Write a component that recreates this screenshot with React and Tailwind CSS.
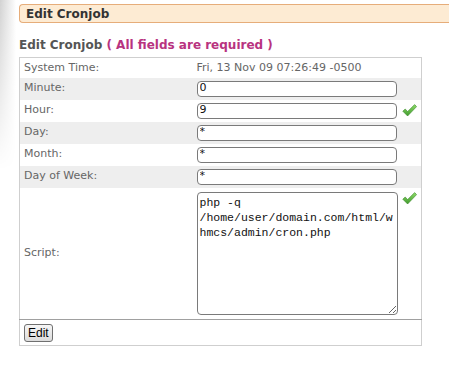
import React from "react";

const font = { fontFamily: '"DejaVu Sans", Verdana, sans-serif' };

const Check = () => (
  <svg width="15" height="13" viewBox="0 0 15 13" className="shrink-0">
    <defs>
      <linearGradient id="chk" x1="0" y1="0" x2="0" y2="1">
        <stop offset="0" stopColor="#8fdc6a" />
        <stop offset="1" stopColor="#3f9a2c" />
      </linearGradient>
    </defs>
    <path d="M0.8 7.2 L3.2 5 L5.6 7.6 L12.6 0.6 L14.6 2.6 L5.6 12 Z" fill="url(#chk)" stroke="#3a8a2a" strokeWidth="0.6" strokeLinejoin="round" />
  </svg>
);

const rows = [
  { label: "Minute:", value: "0", alt: true },
  { label: "Hour:", value: "9", ok: true },
  { label: "Day:", value: "*", alt: true },
  { label: "Month:", value: "*" },
  { label: "Day of Week:", value: "*", alt: true },
];

export default function App() {
  return (
    <div className="flex min-h-[366px] w-[449px] overflow-hidden bg-white" style={font}>
      <div className="h-[170px] w-[19px] shrink-0 bg-[linear-gradient(to_right,#d2d2d2,#ffffff_85%)] [mask-image:linear-gradient(to_bottom,black,transparent)]" />
      <div className="flex-1 pt-[4px]">
        <div className="flex h-[19px] items-center rounded-l-[4px] border border-r-0 border-[#e6ad7a] bg-[#fdebd3] pl-[6px] text-[12px] font-bold text-[#333]">
          Edit Cronjob
        </div>
        <div className="mt-[15px] text-[12px] font-bold leading-[15px] text-[#555]">
          Edit Cronjob <span className="text-[#b83380]">( All fields are required )</span>
        </div>
        <table className="mt-[4px] w-[403px] border-collapse border border-[#cfcfcf] text-[11px] text-[#666]">
          <tbody>
            <tr className="h-[20px]">
              <td className="w-[173px] pl-[4px] align-middle">System Time:</td>
              <td className="pl-[4px] align-middle">Fri, 13 Nov 09 07:26:49 -0500</td>
            </tr>
            {rows.map((r) => (
              <tr key={r.label} className={`h-[22px] ${r.alt ? "bg-[#eeeeee]" : ""}`}>
                <td className="pl-[4px] align-middle">{r.label}</td>
                <td className="pl-[4px] align-middle">
                  <div className="flex items-center gap-[5px]">
                    <input
                      readOnly
                      value={r.value}
                      className="h-[16px] w-[200px] rounded-[4px] border border-[#7a7a7a] bg-white px-[2px] text-[11px] text-[#111] outline-none"
                      style={font}
                    />
                    {r.ok && <Check />}
                  </div>
                </td>
              </tr>
            ))}
            <tr className="h-[132px]">
              <td className="pl-[4px] align-middle">Script:</td>
              <td className="pl-[4px] align-top pt-[4px]">
                <div className="flex items-start gap-[4px]">
                  <textarea
                    readOnly
                    value="php -q /home/user/domain.com/html/whmcs/admin/cron.php"
                    className="h-[123px] w-[201px] rounded-[4px] border border-[#7a7a7a] bg-white px-[2px] py-[2px] text-[11.5px] leading-[15px] text-[#111] outline-none"
                    style={{ fontFamily: '"Liberation Mono", "Courier New", monospace' }}
                  />
                  <Check />
                </div>
              </td>
            </tr>
            <tr className="h-[26px] border-t border-[#a0a0a0]">
              <td colSpan={2} className="pl-[4px] align-middle">
                <button
                  className="flex h-[18px] items-center rounded-[3px] border border-[#707070] bg-[linear-gradient(to_bottom,#f6f6f6,#dcdcdc)] px-[3px] text-[12px] text-black"
                  style={{ fontFamily: '"Liberation Sans", Arial, sans-serif' }}
                >
                  Edit
                </button>
              </td>
            </tr>
          </tbody>
        </table>
      </div>
    </div>
  );
}
